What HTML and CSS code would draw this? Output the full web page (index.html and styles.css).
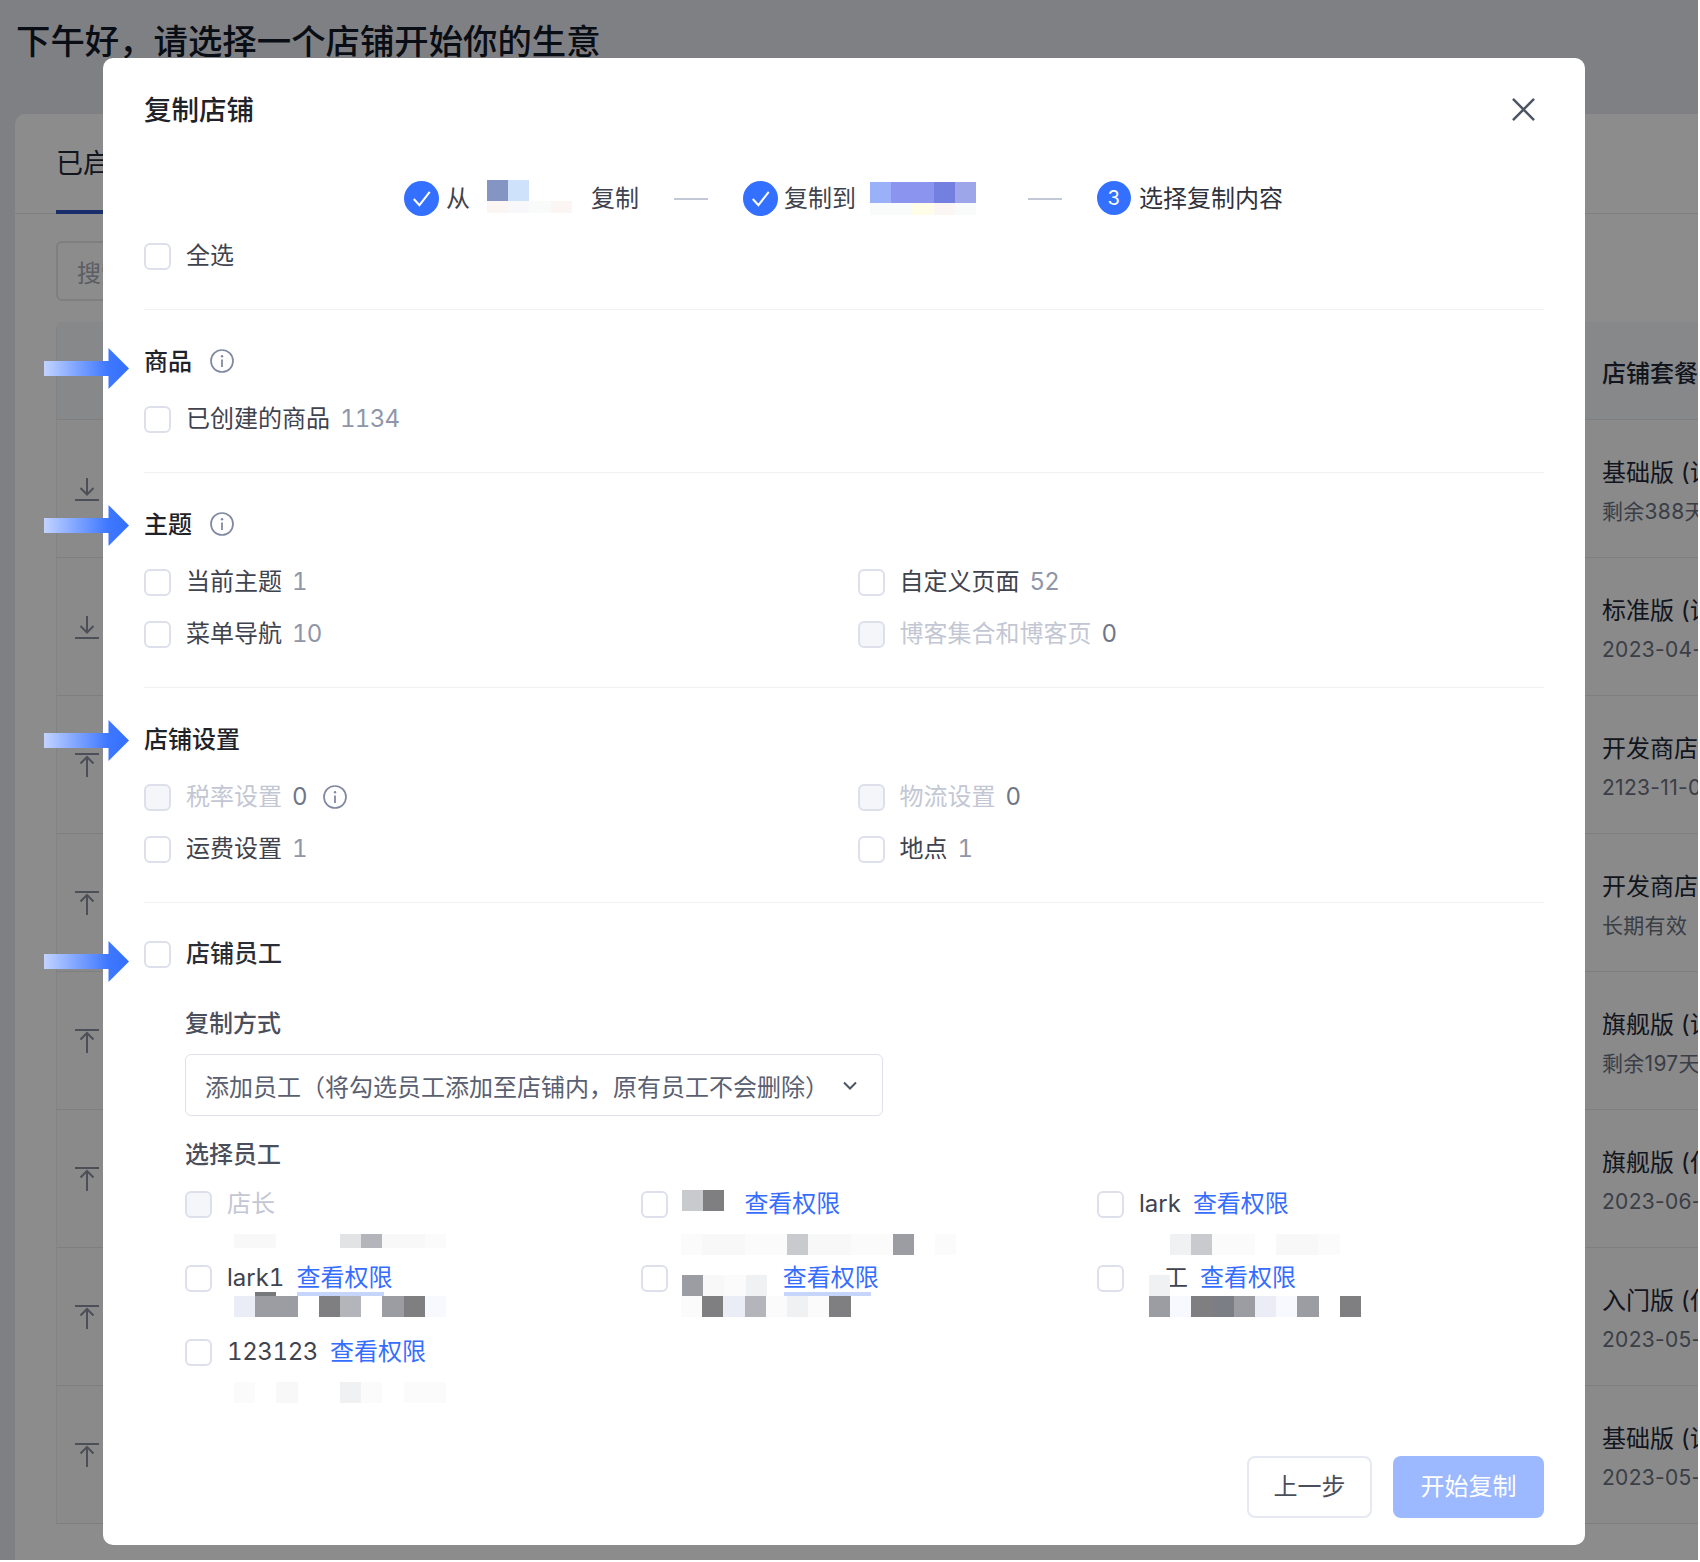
FILE: index.html
```html
<!DOCTYPE html>
<html lang="zh-CN">
<head>
<meta charset="utf-8">
<title>复制店铺</title>
<link rel="stylesheet" href="styles.css">
</head>
<body>
<svg class="defs" width="0" height="0" aria-hidden="true">
  <defs>
    <linearGradient id="arrowFill" x1="0" y1="0" x2="1" y2="0">
      <stop offset="0" stop-color="#c2d3ff"/>
      <stop offset="0.75" stop-color="#3f78ff"/>
      <stop offset="1" stop-color="#3370ff"/>
    </linearGradient>
    <symbol id="arrow" viewBox="0 0 85 41"><path d="M0 13H64.500V0L85 20.500 64.500 41V28H0Z" fill="url(#arrowFill)"/></symbol>
    <symbol id="info" viewBox="0 0 24 24"><circle cx="12" cy="12" r="11" fill="none" stroke="currentColor" stroke-width="1.700"/><circle cx="12" cy="7.300" r="1.200" fill="currentColor"/><path d="M12 10.500V18" stroke="currentColor" stroke-width="1.800" fill="none"/></symbol>
    <symbol id="check" viewBox="0 0 34 34"><circle cx="17" cy="17" r="17" fill="#3370ff"/><path d="M9.500 17.500l5.500 6 10-13" fill="none" stroke="#fff" stroke-width="2"/></symbol>
    <symbol id="down" viewBox="0 0 24 24"><path d="M12 1V17M5.500 11l6.500 6.500 6.500-6.500M0 23H24" fill="none" stroke="currentColor" stroke-width="2"/></symbol>
    <symbol id="up" viewBox="0 0 24 24"><path d="M12 24V4M5.500 10.500L12 4l6.500 6.500M0 1H24" fill="none" stroke="currentColor" stroke-width="2"/></symbol>
  </defs>
</svg>
<div class="screen">
  <div class="page">
    <h1 class="greeting">下午好，请选择一个店铺开始你的生意</h1>
    <div class="card">
      <div class="tabs"><span class="tab">已启用</span></div>
      <div class="search-wrap"><div class="search">搜索店铺</div></div>
      <div class="table">
        <div class="tr tr-head"><span class="plan-title">店铺套餐</span></div>
        <div class="tr"><svg class="row-icon"><use href="#down"/></svg><div class="plan"><span class="plan-title">基础版 (试用)</span><span class="plan-sub">剩余388天</span></div></div>
        <div class="tr"><svg class="row-icon"><use href="#down"/></svg><div class="plan"><span class="plan-title">标准版 (试用)</span><span class="plan-sub">2023-04-01</span></div></div>
        <div class="tr"><svg class="row-icon"><use href="#up"/></svg><div class="plan"><span class="plan-title">开发商店</span><span class="plan-sub">2123-11-01</span></div></div>
        <div class="tr"><svg class="row-icon"><use href="#up"/></svg><div class="plan"><span class="plan-title">开发商店</span><span class="plan-sub">长期有效</span></div></div>
        <div class="tr"><svg class="row-icon"><use href="#up"/></svg><div class="plan"><span class="plan-title">旗舰版 (试用)</span><span class="plan-sub">剩余197天</span></div></div>
        <div class="tr"><svg class="row-icon"><use href="#up"/></svg><div class="plan"><span class="plan-title">旗舰版 (付费)</span><span class="plan-sub">2023-06-01</span></div></div>
        <div class="tr"><svg class="row-icon"><use href="#up"/></svg><div class="plan"><span class="plan-title">入门版 (付费)</span><span class="plan-sub">2023-05-01</span></div></div>
        <div class="tr"><svg class="row-icon"><use href="#up"/></svg><div class="plan"><span class="plan-title">基础版 (试用)</span><span class="plan-sub">2023-05-01</span></div></div>
      </div>
    </div>
  </div>
  <div class="scrim"></div>

  <div class="modal">
    <div class="modal-head">
      <h2 class="modal-title">复制店铺</h2>
      <svg class="close" viewBox="0 0 24 24"><path d="M1 1L23 23M23 1L1 23" fill="none" stroke="currentColor" stroke-width="2.600"/></svg>
    </div>

    <div class="steps">
      <svg class="step-dot"><use href="#check"/></svg>
      <span class="step-text step-text-a">从</span>
      <span class="step-shop step-shop-a">
        <span class="mos"><b class="s1"></b><b class="s2"></b></span>
        <span class="mos mos-faint"><b class="f1"></b><b class="f2"></b><b class="f3"></b><b class="f1"></b></span>
      </span>
      <span class="step-text">复制</span>
      <span class="step-line"></span>
      <svg class="step-dot"><use href="#check"/></svg>
      <span class="step-text step-text-b">复制到</span>
      <span class="step-shop step-shop-b">
        <span class="mos"><b class="s3"></b><b class="s4"></b><b class="s5"></b><b class="s6"></b><b class="s7"></b></span>
        <span class="mos mos-faint"><b class="f3"></b><b class="f3"></b><b class="f4"></b><b class="f1"></b><b class="f3"></b></span>
      </span>
      <span class="step-line step-line-b"></span>
      <span class="step-num">3</span>
      <span class="step-text step-text-c">选择复制内容</span>
    </div>

    <div class="check-row select-all"><span class="box"></span><span>全选</span></div>

    <section class="group">
      <svg class="mark"><use href="#arrow"/></svg>
      <div class="group-head"><span>商品</span><svg class="info"><use href="#info"/></svg></div>
      <div class="check-row"><span class="box"></span><span>已创建的商品</span><span class="count">1134</span></div>
    </section>

    <section class="group">
      <svg class="mark mark-mid"><use href="#arrow"/></svg>
      <div class="group-head"><span>主题</span><svg class="info"><use href="#info"/></svg></div>
      <div class="two-col">
        <div class="check-row"><span class="box"></span><span>当前主题</span><span class="count">1</span></div>
        <div class="check-row"><span class="box"></span><span>自定义页面</span><span class="count">52</span></div>
        <div class="check-row"><span class="box"></span><span>菜单导航</span><span class="count">10</span></div>
        <div class="check-row is-off"><span class="box"></span><span>博客集合和博客页</span><span class="count">0</span></div>
      </div>
    </section>

    <section class="group">
      <svg class="mark mark-mid"><use href="#arrow"/></svg>
      <div class="group-head"><span>店铺设置</span></div>
      <div class="two-col">
        <div class="check-row is-off"><span class="box"></span><span>税率设置</span><span class="count">0</span><svg class="info info-inline"><use href="#info"/></svg></div>
        <div class="check-row is-off"><span class="box"></span><span>物流设置</span><span class="count">0</span></div>
        <div class="check-row"><span class="box"></span><span>运费设置</span><span class="count">1</span></div>
        <div class="check-row"><span class="box"></span><span>地点</span><span class="count">1</span></div>
      </div>
    </section>

    <section class="group group-last">
      <svg class="mark"><use href="#arrow"/></svg>
      <div class="check-row staff-head"><span class="box"></span><span>店铺员工</span></div>
      <div class="staff">
        <div class="field-label">复制方式</div>
        <div class="select">
          <span>添加员工（将勾选员工添加至店铺内，原有员工不会删除）</span>
          <svg class="chev" viewBox="0 0 14 9"><path d="M1 1.500L7 7.500 13 1.500" fill="none" stroke="currentColor" stroke-width="2"/></svg>
        </div>
        <div class="field-label field-label-b">选择员工</div>
        <div class="staff-grid">
          <div class="person">
            <div class="check-row is-off"><span class="box"></span><span>店长</span></div>
            <div class="mos mos-low mos-short at-a"><b class="g9"></b><b class="g9"></b><b></b><b></b><b></b><b class="g6"></b><b class="g4"></b><b class="g9"></b><b class="g9"></b><b class="g10"></b></div>
          </div>
          <div class="person">
            <div class="check-row"><span class="box"></span><span class="mos name-mos"><b class="g5"></b><b class="g2"></b></span><a class="link link-b">查看权限</a></div>
            <div class="mos mos-low at-b"><b class="g10"></b><b class="g9"></b><b class="g9"></b><b class="g10"></b><b class="g10"></b><b class="g5"></b><b class="g9"></b><b class="g9"></b><b class="g10"></b><b class="g10"></b><b class="g3"></b><b></b><b class="g10"></b></div>
          </div>
          <div class="person">
            <div class="check-row"><span class="box"></span><span>lark</span><a class="link">查看权限</a></div>
            <div class="mos mos-low at-c"><b class="g8"></b><b class="g5"></b><b class="g10"></b><b class="g10"></b><b></b><b class="g9"></b><b class="g9"></b><b class="g10"></b></div>
          </div>

          <div class="person">
            <div class="check-row"><span class="box"></span><span>lark1</span><a class="link smudge">查看权限</a></div>
            <div class="mos at-a"><b class="t1"></b><b class="g3 nub"></b><b class="g3"></b><b></b><b class="g2"></b><b class="g4"></b><b></b><b class="g3"></b><b class="g2"></b><b class="t2"></b></div>
          </div>
          <div class="person">
            <div class="check-row"><span class="box"></span><span class="mos name-mos name-mos-low"><b class="g3"></b><b class="g9"></b><b class="g10"></b><b class="g8"></b></span><a class="link link-c smudge">查看权限</a></div>
            <div class="mos at-b"><b class="g10"></b><b class="g2"></b><b class="t1"></b><b class="g4"></b><b class="g10"></b><b class="g8"></b><b class="g10"></b><b class="g2"></b></div>
          </div>
          <div class="person">
            <div class="check-row"><span class="box"></span><span class="partial"><b class="g8"></b>工</span><a class="link">查看权限</a></div>
            <div class="mos at-d"><b class="g3"></b><b class="t2"></b><b class="g2"></b><b class="g1"></b><b class="g3"></b><b class="t1"></b><b class="t2"></b><b class="g3"></b><b></b><b class="g2"></b></div>
          </div>

          <div class="person">
            <div class="check-row"><span class="box"></span><span class="digits">123123</span><a class="link">查看权限</a></div>
            <div class="mos mos-low at-a"><b class="g10"></b><b></b><b class="g9"></b><b></b><b></b><b class="g8"></b><b class="g10"></b><b></b><b class="g10"></b><b class="g10"></b></div>
          </div>
        </div>
      </div>
    </section>

    <div class="modal-foot">
      <button class="btn btn-ghost" type="button">上一步</button>
      <button class="btn btn-primary" type="button">开始复制</button>
    </div>
  </div>
</div>
</body>
</html>
```
FILE: styles.css
```css
* { box-sizing: border-box; }
html, body { margin: 0; height: 100%; overflow: hidden; background: #fff; }
body { font-family: Inter, "Noto Sans CJK SC", sans-serif; font-size: 24px; color: #4b4f5c; font-variant-numeric: tabular-nums; }
.defs { position: absolute; }

.screen { position: relative; width: 1698px; height: 1560px; overflow: hidden; }

/* page behind the dialog */
.page { height: 100%; padding: 19px 0 0 15px; background: #e8eaee; display: flex; flex-direction: column; }
.greeting { margin: 0 0 0 1px; font-size: 34.400px; line-height: 46px; font-weight: 500; color: #111827; height: 95px; white-space: nowrap; }
.card { flex: 1; background: #fff; border-radius: 10px 0 0 0; min-height: 0; }
.tabs { height: 100px; padding: 29px 0 0 41px; border-bottom: 1px solid #e5e7eb; }
.tab { display: inline-block; height: 71px; width: 120px; font-size: 27px; line-height: 42px; color: #1f2937; border-bottom: 4px solid #2f55c4; }
.search-wrap { padding: 27px 0 21px 41px; }
.search { width: 500px; height: 60px; padding: 2px 0 0 19px; line-height: 58px; font-size: 24px; color: #a7abb5; border: 2px solid #e5e7eb; border-radius: 6px; }
.table { margin-left: 41px; border-left: 1px solid #eceef2; background: #fbfbfc; border-radius: 8px 0 0 0; }
.tr { display: flex; align-items: center; justify-content: space-between; height: 138px; padding: 0 0 0 18px; border-bottom: 1px solid #e5e7eb; color: #1f2937; }
.tr-head { height: 98px; padding-top: 6px; justify-content: flex-end; background: #f6f7f9; }
.tr-head .plan-title { width: 96px; white-space: nowrap; overflow: hidden; font-weight: 500; }
.row-icon { width: 24px; height: 24px; color: #8a909e; }
.plan { width: 96px; display: flex; flex-direction: column; gap: 8px; overflow: hidden; white-space: nowrap; padding-top: 6px; }
.plan-title { font-size: 24px; line-height: 32px; color: #1f2937; }
.plan-sub { font-size: 21px; line-height: 30px; color: #6b7280; font-variant-numeric: normal; letter-spacing: 0.3px; }

.scrim { position: absolute; inset: 0; background: rgba(0, 0, 0, 0.45); }

/* dialog */
.modal { position: absolute; left: 103px; top: 58px; width: 1482px; height: 1487px; padding: 34px 41px 27px; background: #fff; border-radius: 10px; display: flex; flex-direction: column; }
.modal-head { display: flex; justify-content: space-between; align-items: center; height: 36px; }
.modal-title { margin: 0; font-size: 27.500px; line-height: 36px; font-weight: 500; color: #1f2329; }
.close { width: 23px; height: 23px; margin: 0 9px 2px 0; color: #4b5563; }

.steps { display: flex; align-items: center; height: 36px; margin-top: 52px; padding-left: 260px; color: #3f434e; }
.step-dot { width: 35px; height: 35px; flex: none; }
.step-text { line-height: 36px; padding-top: 1px; white-space: nowrap; }
.step-text-a { margin-left: 7px; }
.step-text-b { margin-left: 6px; }
.step-text-c { margin-left: 8px; color: #2f323a; }
.step-shop { display: flex; flex-direction: column; align-self: flex-start; }
.step-shop-a { width: 121px; padding-left: 17px; }
.step-shop-b { width: 172px; padding-left: 14px; padding-top: 2px; }
.step-line { width: 34px; height: 2px; margin: 2px 35px 0; background: #c3c8d6; }
.step-line-b { margin-left: 0; }
.step-num { width: 34px; height: 34px; flex: none; border-radius: 50%; background: #3370ff; color: #fff; font-size: 20px; line-height: 34px; text-align: center; }

.mos { display: flex; }
.mos b { display: block; flex: none; width: 21.200px; height: 21px; }
.mos-faint b { height: 12px; }
.mos-low { margin-top: 12px; }
.mos-short b { height: 14px; }
.at-a { margin-left: 49px; }
.at-b { margin-left: 40px; }
.at-c { margin-left: 73px; }
.at-d { margin-left: 52px; }
.name-mos { align-self: flex-start; margin: 4px 0 0 -1px; }
.name-mos-low { margin-top: 15px; }
.partial { display: flex; align-items: center; margin-left: 10px; }
.partial b { display: block; width: 21px; height: 21px; margin: 15px -6px 0 0; position: relative; z-index: 1; }
.nub { position: relative; }
.nub::before { content: ""; position: absolute; left: 0; right: 0; top: -4px; height: 4px; background: #77787a; }

.s1 { background: #8595c3; }
.s2 { background: #cfe2fb; }
.s3 { background: #9ab0f8; }
.s4 { background: #8b94ef; }
.s5 { background: #8b94ef; }
.s6 { background: #7380e0; }
.s7 { background: #9ea6ea; }
.f1 { background: #fbf5f3; }
.f2 { background: #f8f8fa; }
.f3 { background: #f9fbfb; }
.f4 { background: #fdfde8; }
.g1 { background: #7c7e85; }
.g2 { background: #7f7f81; }
.g3 { background: #9c9da2; }
.g4 { background: #b4b5ba; }
.g5 { background: #c9cacd; }
.g6 { background: #e2e3e5; }
.g8 { background: #f0f1f3; }
.g9 { background: #f8f8f9; }
.g10 { background: #fbfbfc; }
.t1 { background: #ebedf6; }
.t2 { background: #f8f9fe; }

.check-row { display: flex; align-items: center; height: 36px; line-height: 36px; white-space: nowrap; color: #3f434e; }
.box { flex: none; width: 27px; height: 27px; margin-right: 15px; border: 2px solid #dde0eb; border-radius: 6px; background: #fff; }
.count { margin-left: 10px; color: #8f96a8; letter-spacing: -0.7px; }
.digits { letter-spacing: -0.4px; }
.is-off { color: #c3c7d3; }
.is-off .box { background: #f5f6fa; }
.is-off .count { color: #6f7688; }

.select-all { margin-top: 22px; }
.group { position: relative; margin-top: 35px; padding-top: 31px; border-top: 1px solid #f0f1f5; }
.group-head { display: flex; align-items: center; gap: 18px; height: 36px; margin-bottom: 24px; font-weight: 500; color: #1f2329; }
.info { width: 24px; height: 24px; flex: none; margin-top: 3px; color: #8189a0; font-weight: 400; }
.info-inline { margin: 0 0 0 16px; }
.two-col { display: grid; grid-template-columns: 1fr 1fr; column-gap: 27px; row-gap: 16px; }
.mark { position: absolute; left: -100px; top: 38px; width: 85px; height: 41px; }
.mark-mid { top: 32px; }

.group-last { padding-top: 33px; }
.staff-head { font-weight: 500; color: #2a2d35; }
.staff { padding-left: 41px; }
.field-label { margin-top: 34px; height: 36px; line-height: 36px; color: #4b4f5c; font-weight: 500; }
.field-label-b { margin-top: 21px; }
.select { display: flex; align-items: center; justify-content: space-between; width: 698px; height: 62px; margin-top: 12px; padding: 0 25px 0 19px; border: 1px solid #dfe1ec; border-radius: 6px; color: #5b6070; white-space: nowrap; }
.chev { width: 14px; height: 9px; color: #4b5563; }
.staff-grid { display: grid; grid-template-columns: repeat(3, 448px); column-gap: 8px; margin-top: 13px; }
.person { height: 74px; }
.link { margin-left: 12px; color: #356dff; }
.link-b { margin-left: 20px; }
.link-c { margin-left: 16px; }
.smudge { position: relative; }
.smudge::after { content: ""; position: absolute; left: 1px; right: 8px; bottom: 0; height: 4px; background: #c5d5fb; }

.modal-foot { margin-top: auto; display: flex; justify-content: flex-end; gap: 21px; }
.btn { height: 62px; padding: 0 0 6px; font: inherit; border-radius: 8px; }
.btn-ghost { width: 125px; background: #fff; border: 2px solid #e7e9f2; color: #4b4f5c; }
.btn-primary { width: 151px; background: #9cb8ff; border: 0; color: #fff; }
```
